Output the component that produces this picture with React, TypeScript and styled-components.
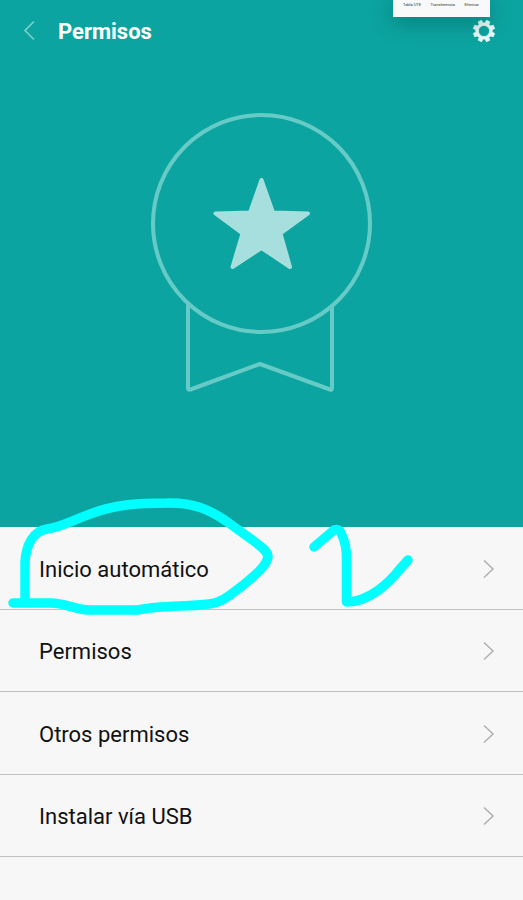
import React from "react";
import styled, { createGlobalStyle } from "styled-components";

const GlobalStyle = createGlobalStyle`
  * { box-sizing: border-box; }
  html, body { margin: 0; background: #f7f7f7; }
  body { font-family: Roboto, "Liberation Sans", sans-serif; color: #111; }
`;

const Screen = styled.main`
  position: relative;
  min-height: 100vh;
  overflow: hidden;
  background: #f7f7f7;
`;

const Hero = styled.section`
  display: flex;
  flex-direction: column;
  align-items: center;
  padding-bottom: 132px;
  background: #0ca4a0;
`;

const Toolbar = styled.header`
  display: flex;
  align-items: center;
  align-self: stretch;
  height: 64px;
  padding: 0 27px 2px 18px;
`;

const IconButton = styled.button`
  display: flex;
  align-items: center;
  justify-content: center;
  width: 24px;
  height: 24px;
  padding: 0;
  border: 0;
  background: none;
  color: #fff;
  cursor: pointer;
`;

const Title = styled.h1`
  flex: 1;
  margin: 0;
  padding: 2px 0 0 16px;
  font-size: 22px;
  line-height: 28px;
  font-weight: 700;
  color: #fff;
`;

const Medal = styled.svg`
  display: block;
  width: 224px;
  height: 284px;
  margin-top: 47px;
`;

const List = styled.ul`
  display: grid;
  grid-auto-rows: 1fr;
  height: 330px;
  margin: 0;
  padding: 0;
  list-style: none;
`;

const Item = styled.li`
  border-bottom: 1px solid #c2c2c2;
`;

const RowButton = styled.button`
  display: flex;
  align-items: center;
  justify-content: space-between;
  width: 100%;
  height: 100%;
  padding: 4px 28px 0 39px;
  border: 0;
  background: none;
  color: #111;
  font-family: inherit;
  font-size: 22px;
  line-height: 28px;
  text-align: left;
  cursor: pointer;
`;

const Thumbnail = styled.aside`
  position: absolute;
  top: 0;
  right: 33px;
  display: flex;
  justify-content: space-between;
  width: 97px;
  height: 17px;
  padding: 2px 11px 0 10px;
  background: #f9f9f9;
  box-shadow: 0 4px 22px rgba(0, 50, 50, 0.4);
  color: #333;
  font-size: 4px;
  line-height: 6px;
`;

const Ink = styled.svg`
  position: absolute;
  top: 490px;
  left: 0;
  width: 420px;
  height: 130px;
  pointer-events: none;
`;

const rows = ["Inicio automático", "Permisos", "Otros permisos", "Instalar vía USB"];

function gearPath() {
  const points: string[] = [];
  const teeth = 8;
  for (let i = 0; i < teeth; i++) {
    const center = (i + 0.5) * ((Math.PI * 2) / teeth);
    [[-0.25, 8.2], [-0.17, 10.9], [0.17, 10.9], [0.25, 8.2]].forEach(([offset, r]) => {
      const x = 12 + Math.cos(center + offset) * r;
      const y = 12 + Math.sin(center + offset) * r;
      points.push(`${x.toFixed(2)} ${y.toFixed(2)}`);
    });
  }
  return `M${points.join("L")}ZM17.600 12A5.600 5.600 0 1 0 6.400 12A5.600 5.600 0 1 0 17.600 12Z`;
}

const BackIcon = () => (
  <svg width="24" height="24" viewBox="0 0 24 24" fill="none" aria-hidden="true">
    <path d="M16 2.500L7 11.500L16 20.500" stroke="#7fd0cd" strokeWidth="1.6" />
  </svg>
);

const GearIcon = () => (
  <svg width="24" height="24" viewBox="0 0 24 24" aria-hidden="true">
    <path d={gearPath()} fill="#eafafa" fillRule="evenodd" stroke="#eafafa" strokeWidth="0.8" strokeLinejoin="round" />
  </svg>
);

const Chevron = () => (
  <svg width="12" height="20" viewBox="0 0 12 20" fill="none" aria-hidden="true">
    <path d="M1 0.500L10 9L1 17.500" stroke="#b0b0b0" strokeWidth="1.5" />
  </svg>
);

export default function App() {
  return (
    <>
      <GlobalStyle />
      <Screen>
        <Hero>
          <Toolbar>
            <IconButton aria-label="Atrás"><BackIcon /></IconButton>
            <Title>Permisos</Title>
            <IconButton aria-label="Ajustes"><GearIcon /></IconButton>
          </Toolbar>
          <Medal viewBox="0 2 224 284" fill="none" aria-hidden="true">
            <g stroke="#66cbc6" strokeWidth="4" strokeLinejoin="round">
              <circle cx="111.5" cy="114.5" r="108.5" />
              <path d="M38 195V279Q38 281.500 40.500 280.500L110 255L180 280.500Q182 281.500 182 279V197" />
            </g>
            <path
              d="M111.500 71L123 103.500L158 104.500L130.500 124.500L140 158L111.500 139L82.500 158L92.500 124.500L65.500 104.500L100 103.500Z"
              fill="#a6dfdd"
              stroke="#a6dfdd"
              strokeWidth="4"
              strokeLinejoin="round"
            />
          </Medal>
        </Hero>
        <List>
          {rows.map((label) => (
            <Item key={label}>
              <RowButton>
                {label}
                <Chevron />
              </RowButton>
            </Item>
          ))}
        </List>
        <Thumbnail>
          <span>Tabla UTE</span>
          <span>Transferencia</span>
          <span>Eliminar</span>
        </Thumbnail>
        <Ink viewBox="0 0 420 130" fill="none" aria-hidden="true">
          <g stroke="#00ffff" strokeWidth="9.500" strokeLinecap="round" strokeLinejoin="round">
            <path d="M25 112V72C26 55 33 41 47 39C62 37 73 30 90 24C116 14 140 13 167 13C193 12 210 20 226 31L255 52C263 58 268 62 268 67C266 77 254 86 242 96C229 106 221 113 209 114C187 117 161 115 138 120H88C73 119 65 113 51 113H13" />
            <path d="M314 57L334 40Q339 38 341 43Q347 55 346.500 70V112C369 112 389 93 400 79L408 70" />
          </g>
        </Ink>
      </Screen>
    </>
  );
}
